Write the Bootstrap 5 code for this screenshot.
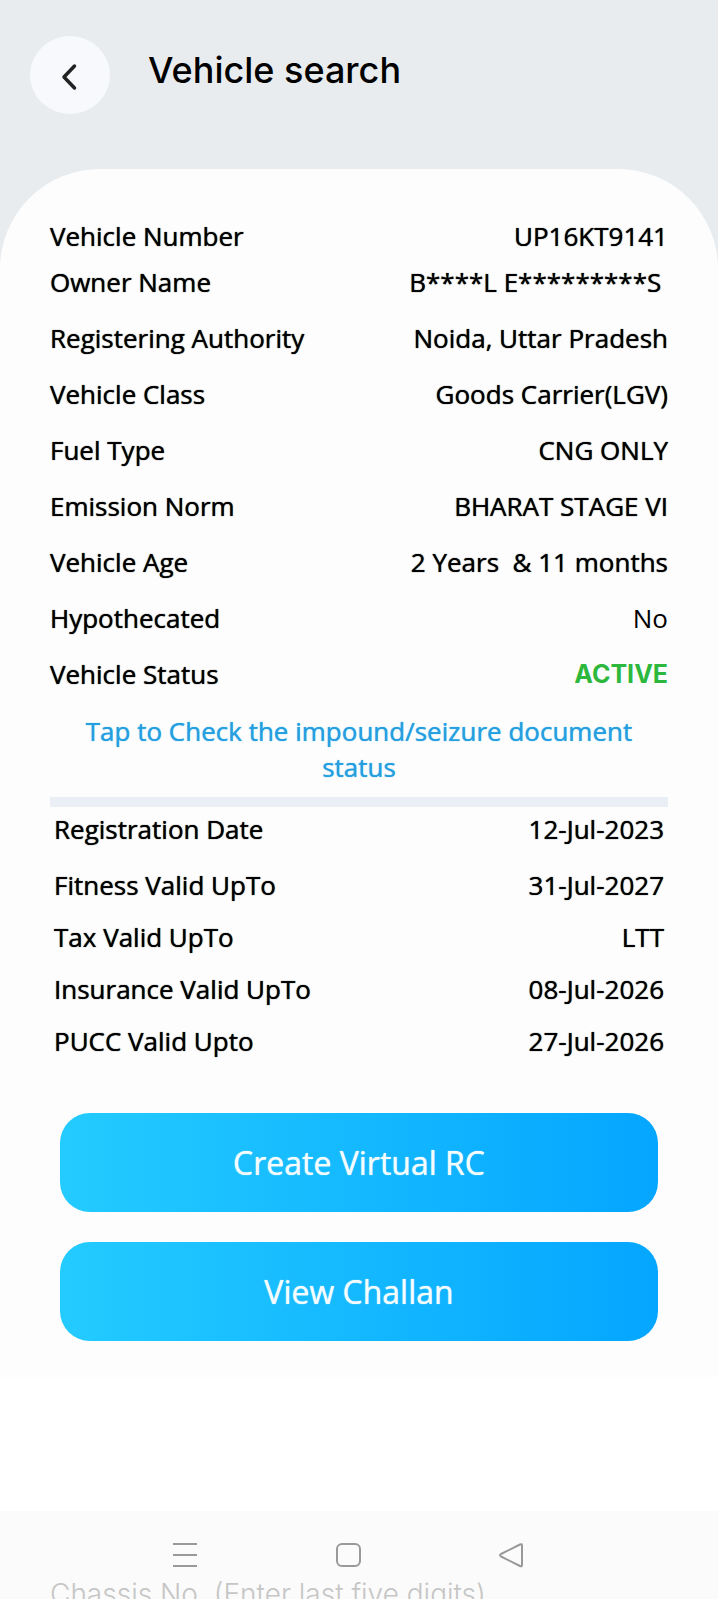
<!DOCTYPE html>
<html lang="en">
<head>
<meta charset="utf-8">
<meta name="viewport" content="width=device-width, initial-scale=1">
<title>Vehicle search</title>
<link href="https://cdn.jsdelivr.net/npm/bootstrap@5.3.0/dist/css/bootstrap.min.css" rel="stylesheet">
<style>
  body { font-family: "Open Sans", sans-serif; font-size: 26px; line-height: 36px; font-weight: 500; color: #000; background: #fff; }
  .screen { background: #e9ecef; }
  .top-bar { height: 169px; padding: 36px 30px 0; gap: 38px; }
  .back-btn { width: 80px; height: 78px; background: #f8f9fd; color: #222; }
  .screen-title { font-family: Inter, sans-serif; font-size: 36px; line-height: 48px; font-weight: 500; padding-top: 10px; }
  .sheet { background: #fdfdfd; border-radius: 100px 100px 0 0; padding: 49px 50px 36px; text-shadow: 0 0 1px currentColor; }
  .details { gap: 20px; }
  .owner-pair { gap: 10px; }
  .validity { gap: 16px; padding: 4px 4px 0; }
  .validity .first { margin-bottom: 4px; }
  dt { font-weight: 500; }
  .value-light { font-weight: 400; text-shadow: none; }
  .status-active { font-family: Inter, sans-serif; font-size: 25px; font-weight: 700; color: #2db83d; text-shadow: none; }
  .seizure-link { color: #269fe0; margin: 21px 0 12px; text-shadow: 0 0 1px currentColor; }
  .divider { height: 10px; background: #e9eff4; }
  .actions { gap: 30px; margin-top: 54px; padding: 0 10px; }
  .action-btn, .action-btn:hover { height: 99px; border: 0; border-radius: 30px; color: #f3fcff; font-size: 32px; font-weight: 500; background: linear-gradient(90deg, #23cbff, #04a6ff); text-shadow: 0 0 1px currentColor; }
  .system-area { height: 88px; background: #fbfbfb; }
  .system-keys { padding: 31px 27% 0 24%; color: #999; }
  .system-keys button { color: inherit; }
  .chassis-label { font-family: Inter, sans-serif; font-size: 28px; font-weight: 300; color: #c6c6c6; padding: 8px 50px 0; }
</style>
</head>
<body>
<div class="d-flex flex-column vh-100 overflow-hidden">
  <div class="screen flex-shrink-0">
    <header class="top-bar d-flex align-items-start">
      <button type="button" class="back-btn btn rounded-circle border-0 p-0 d-flex align-items-center justify-content-center flex-shrink-0" aria-label="Back">
        <svg width="26" height="32" viewBox="0 0 26 32" fill="none" stroke="currentColor" stroke-width="3.500" stroke-linecap="round" stroke-linejoin="round" aria-hidden="true"><path d="M17.500 7 7 18 17.500 29"/></svg>
      </button>
      <h1 class="screen-title mb-0">Vehicle search</h1>
    </header>
    <main class="sheet">
      <dl class="details d-flex flex-column mb-0">
        <div class="owner-pair d-flex flex-column">
          <div class="d-flex justify-content-between"><dt>Vehicle Number</dt><dd class="mb-0">UP16KT9141</dd></div>
          <div class="d-flex justify-content-between"><dt>Owner Name</dt><dd class="mb-0">B****L E*********S&nbsp;</dd></div>
        </div>
        <div class="d-flex justify-content-between"><dt>Registering Authority</dt><dd class="mb-0">Noida, Uttar Pradesh</dd></div>
        <div class="d-flex justify-content-between"><dt>Vehicle Class</dt><dd class="mb-0">Goods Carrier(LGV)</dd></div>
        <div class="d-flex justify-content-between"><dt>Fuel Type</dt><dd class="mb-0">CNG ONLY</dd></div>
        <div class="d-flex justify-content-between"><dt>Emission Norm</dt><dd class="mb-0">BHARAT STAGE VI</dd></div>
        <div class="d-flex justify-content-between"><dt>Vehicle Age</dt><dd class="mb-0">2 Years&nbsp; &amp; 11 months</dd></div>
        <div class="d-flex justify-content-between"><dt>Hypothecated</dt><dd class="value-light mb-0">No</dd></div>
        <div class="d-flex justify-content-between"><dt>Vehicle Status</dt><dd class="status-active mb-0">ACTIVE</dd></div>
      </dl>
      <a href="#" class="seizure-link d-block text-center text-decoration-none">Tap to Check the impound/seizure document status</a>
      <div class="divider"></div>
      <dl class="validity d-flex flex-column mb-0">
        <div class="first d-flex justify-content-between"><dt>Registration Date</dt><dd class="mb-0">12-Jul-2023</dd></div>
        <div class="d-flex justify-content-between"><dt>Fitness Valid UpTo</dt><dd class="mb-0">31-Jul-2027</dd></div>
        <div class="d-flex justify-content-between"><dt>Tax Valid UpTo</dt><dd class="mb-0">LTT</dd></div>
        <div class="d-flex justify-content-between"><dt>Insurance Valid UpTo</dt><dd class="mb-0">08-Jul-2026</dd></div>
        <div class="d-flex justify-content-between"><dt>PUCC Valid Upto</dt><dd class="mb-0">27-Jul-2026</dd></div>
      </dl>
      <div class="actions d-flex flex-column">
        <button type="button" class="action-btn btn">Create Virtual RC</button>
        <button type="button" class="action-btn btn">View Challan</button>
      </div>
    </main>
  </div>
  <footer class="system-area mt-auto overflow-hidden flex-shrink-0">
    <nav class="system-keys d-flex justify-content-between" aria-label="System">
      <button type="button" class="btn p-0 border-0 d-flex" aria-label="Recent apps"><svg width="26" height="26" viewBox="0 0 26 26" fill="none" stroke="currentColor" stroke-width="2" aria-hidden="true"><path d="M1 2H25M1 13H25M1 24H25"/></svg></button>
      <button type="button" class="btn p-0 border-0 d-flex" aria-label="Home"><svg width="26" height="26" viewBox="0 0 26 26" fill="none" stroke="currentColor" stroke-width="2" aria-hidden="true"><rect x="2" y="2" width="23" height="22" rx="5"/></svg></button>
      <button type="button" class="btn p-0 border-0 d-flex" aria-label="Back to previous screen"><svg width="26" height="26" viewBox="0 0 26 26" fill="none" stroke="currentColor" stroke-width="2" stroke-linejoin="round" aria-hidden="true"><path d="M22 2.500 3 12Q1 13.200 3 14.500L22 24Q24 25 24 23V3.500Q24 1.500 22 2.500Z"/></svg></button>
    </nav>
    <div class="chassis-label text-nowrap">Chassis No. (Enter last five digits)</div>
  </footer>
</div>
<script src="https://cdn.jsdelivr.net/npm/bootstrap@5.3.0/dist/js/bootstrap.bundle.min.js"></script>
</body>
</html>
